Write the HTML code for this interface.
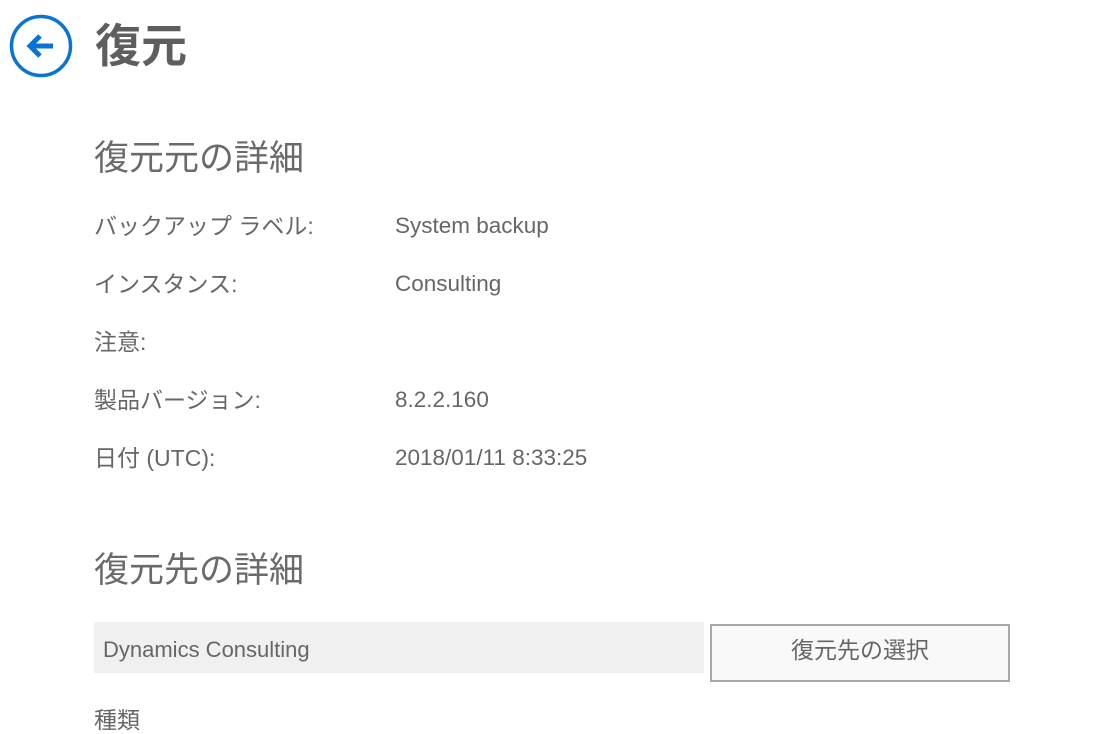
<!DOCTYPE html>
<html><head><meta charset="utf-8"><style>
body{margin:0;width:1114px;height:718px;overflow:hidden;background:#fff;font-family:"Liberation Sans","Noto Sans CJK JP",sans-serif;color:#666;position:relative}
.a{position:absolute;white-space:nowrap}
.h1{left:95px;top:16px;font-size:46px;font-weight:bold;color:#5e5e5e;line-height:60px}
.h2{left:94px;font-size:35px;line-height:40px;color:#6a6a6a}
.l{left:94px;font-size:23px;line-height:28px}
.v{left:395px;font-size:22.5px;line-height:28px}
</style></head><body>
<svg class="a" style="left:9px;top:14px" width="64" height="64" viewBox="0 0 64 64">
<circle cx="32" cy="32" r="29.5" fill="none" stroke="#0a74d4" stroke-width="3.5"/>
<path d="M44 32H22M31 22L21 32L31 42" fill="none" stroke="#0a74d4" stroke-width="5" stroke-linecap="butt" stroke-linejoin="miter"/>
</svg>
<div class="a h1">復元</div>
<div class="a h2" style="top:139px">復元元の詳細</div>
<div class="a l" style="top:212px">バックアップ ラベル:</div><div class="a v" style="top:212px">System backup</div>
<div class="a l" style="top:270px">インスタンス:</div><div class="a v" style="top:270px">Consulting</div>
<div class="a l" style="top:328px">注意:</div>
<div class="a l" style="top:386px">製品バージョン:</div><div class="a v" style="top:386px">8.2.2.160</div>
<div class="a l" style="top:444px">日付 (UTC):</div><div class="a v" style="top:444px">2018/01/11 8:33:25</div>
<div class="a h2" style="top:551px">復元先の詳細</div>
<div class="a" style="left:94px;top:622px;width:610px;height:51px;background:#f0f0f0;font-size:22px;line-height:55px;color:#666"><span style="padding-left:9px">Dynamics Consulting</span></div>
<div class="a" style="left:710px;top:624px;width:296px;height:54px;border:2px solid #a8a8a8;background:#f9f9f9;font-size:23px;line-height:48px;text-align:center;color:#666">復元先の選択</div>
<div class="a l" style="top:706px">種類</div>
</body></html>
